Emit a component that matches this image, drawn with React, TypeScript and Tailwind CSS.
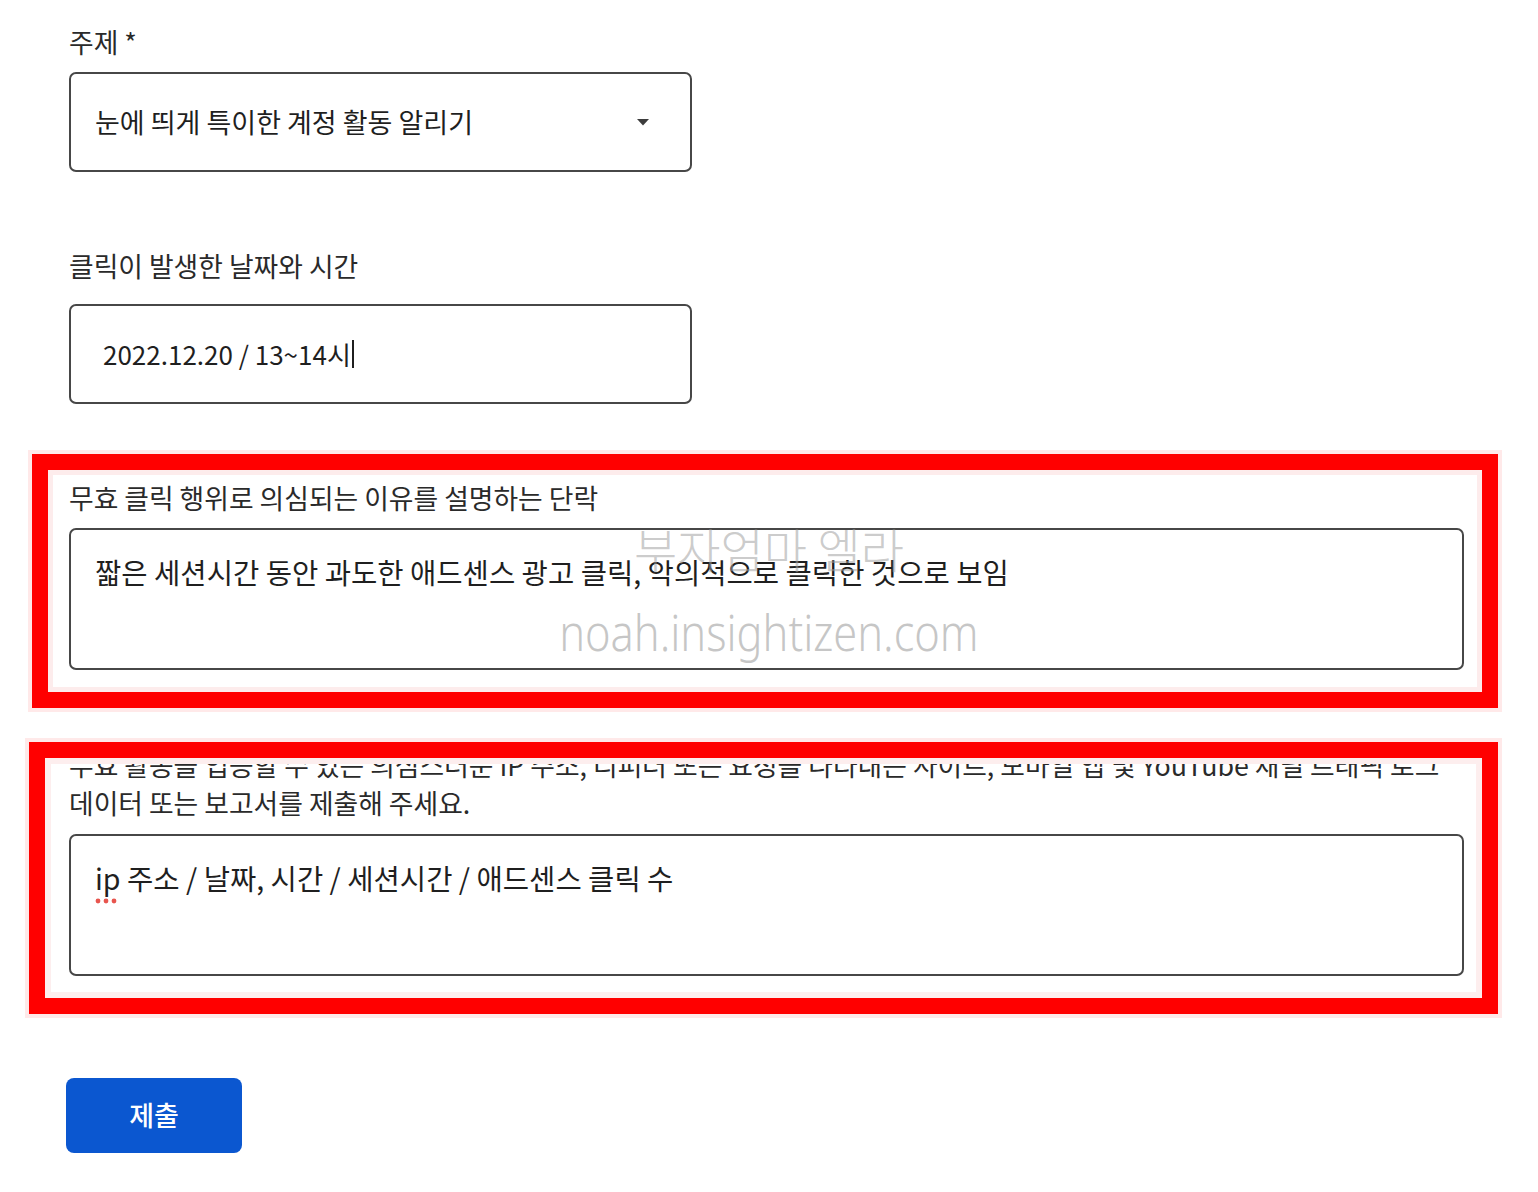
import React from "react";

const labelCls = "h-[36px] leading-[36px] text-[26.8px] text-[#2a2a2a] whitespace-nowrap";

export default function App() {
  return (
    <div className="w-[1538px] h-[1192px] bg-white overflow-hidden font-['Noto_Sans_CJK_KR','Noto_Sans',sans-serif] text-[#1f1f1f]">
      <div className="ml-[69px] w-[1395px] pt-[24px]">
        {/* 주제 */}
        <div className={labelCls}>주제 *</div>
        <div className="mt-[12px] w-[623px] h-[100px] border-2 border-[#474747] rounded-[7px] flex items-center justify-between pl-[24px] pr-[41px]">
          <span className="text-[27px] leading-[36px] whitespace-nowrap">눈에 띄게 특이한 계정 활동 알리기</span>
          <svg width="12" height="7" viewBox="0 0 12 7" className="block">
            <path d="M0 0 L12 0 L6 6.5 Z" fill="#3c3c3c" />
          </svg>
        </div>

        {/* 날짜와 시간 */}
        <div className={`${labelCls} mt-[76px]`}>클릭이 발생한 날짜와 시간</div>
        <div className="mt-[20px] w-[623px] h-[100px] border-2 border-[#474747] rounded-[7px] flex items-center pl-[32px]">
          <span className="text-[26px] leading-[36px] whitespace-nowrap">2022.12.20 / 13~14시</span>
          <span className="ml-[1px] inline-block w-[2px] h-[28px] bg-[#1f1f1f]" />
        </div>

        {/* 박스 1 */}
        <div className="relative mt-[76px]">
          <div className={labelCls}>무효 클릭 행위로 의심되는 이유를 설명하는 단락</div>
          <div className="mt-[12px] h-[142px] border-2 border-[#474747] rounded-[7px] pl-[24px] pt-[24px]">
            <div className="text-[28.6px] leading-[36px] whitespace-nowrap">
              짧은 세션시간 동안 과도한 애드센스 광고 클릭, 악의적으로 클릭한 것으로 보임
            </div>
          </div>
          {/* watermark */}
          <div className="absolute left-[420px] top-[43px] w-[560px] flex flex-col items-center pointer-events-none">
            <div className="h-[50px] leading-[50px] text-[47px] font-light text-[#a0a0a0]/55 whitespace-nowrap">부자엄마 엘라</div>
            <div className="mt-[29px] h-[60px] leading-[60px] text-[50px] font-light font-['Noto_Sans',sans-serif] text-[#b4b4b4]/75 whitespace-nowrap scale-x-[0.867]">
              noah.insightizen.com
            </div>
          </div>
          {/* red frame */}
          <div className="absolute left-[-37px] right-[-34px] top-[-26px] bottom-[-38px] border-[16px] border-[#ff0000] shadow-[0_0_0_4px_#ffe9e9,inset_0_0_0_5px_#fdecec] pointer-events-none" />
        </div>

        {/* 박스 2 */}
        <div className="relative mt-[76px]">
          <div className="text-[26.8px] leading-[38px] text-[#2a2a2a] whitespace-nowrap">
            무효 활동을 입증할 수 있는 의심스러운 IP 주소, 리퍼러 또는 요청을 나타내는 사이트, 모바일 앱 및 YouTube 채널 트래픽 로그
            <br />
            데이터 또는 보고서를 제출해 주세요.
          </div>
          <div className="mt-[12px] h-[142px] border-2 border-[#474747] rounded-[7px] pl-[24px] pt-[24px]">
            <div className="text-[28.6px] leading-[36px] whitespace-nowrap">
              <span className="relative">
                ip
                <svg width="22" height="6" viewBox="0 0 22 6" className="absolute left-0 bottom-[-6px]">
                  <circle cx="3" cy="3" r="2.4" fill="#e8554e" />
                  <circle cx="11" cy="3" r="2.4" fill="#e8554e" />
                  <circle cx="19" cy="3" r="2.4" fill="#e8554e" />
                </svg>
              </span>{" "}
              주소 / 날짜, 시간 / 세션시간 / 애드센스 클릭 수
            </div>
          </div>
          {/* red frame */}
          <div className="absolute left-[-40px] right-[-34px] top-[-4px] bottom-[-38px] border-[16px] border-[#ff0000] shadow-[0_0_0_4px_#ffe9e9,inset_0_0_0_6px_#fdeeee] pointer-events-none" />
        </div>

        {/* 제출 */}
        <button className="mt-[102px] ml-[-3px] w-[176px] h-[75px] rounded-[8px] bg-[#0b57d0] text-white text-[27px] font-medium flex items-center justify-center">
          제출
        </button>
      </div>
    </div>
  );
}
